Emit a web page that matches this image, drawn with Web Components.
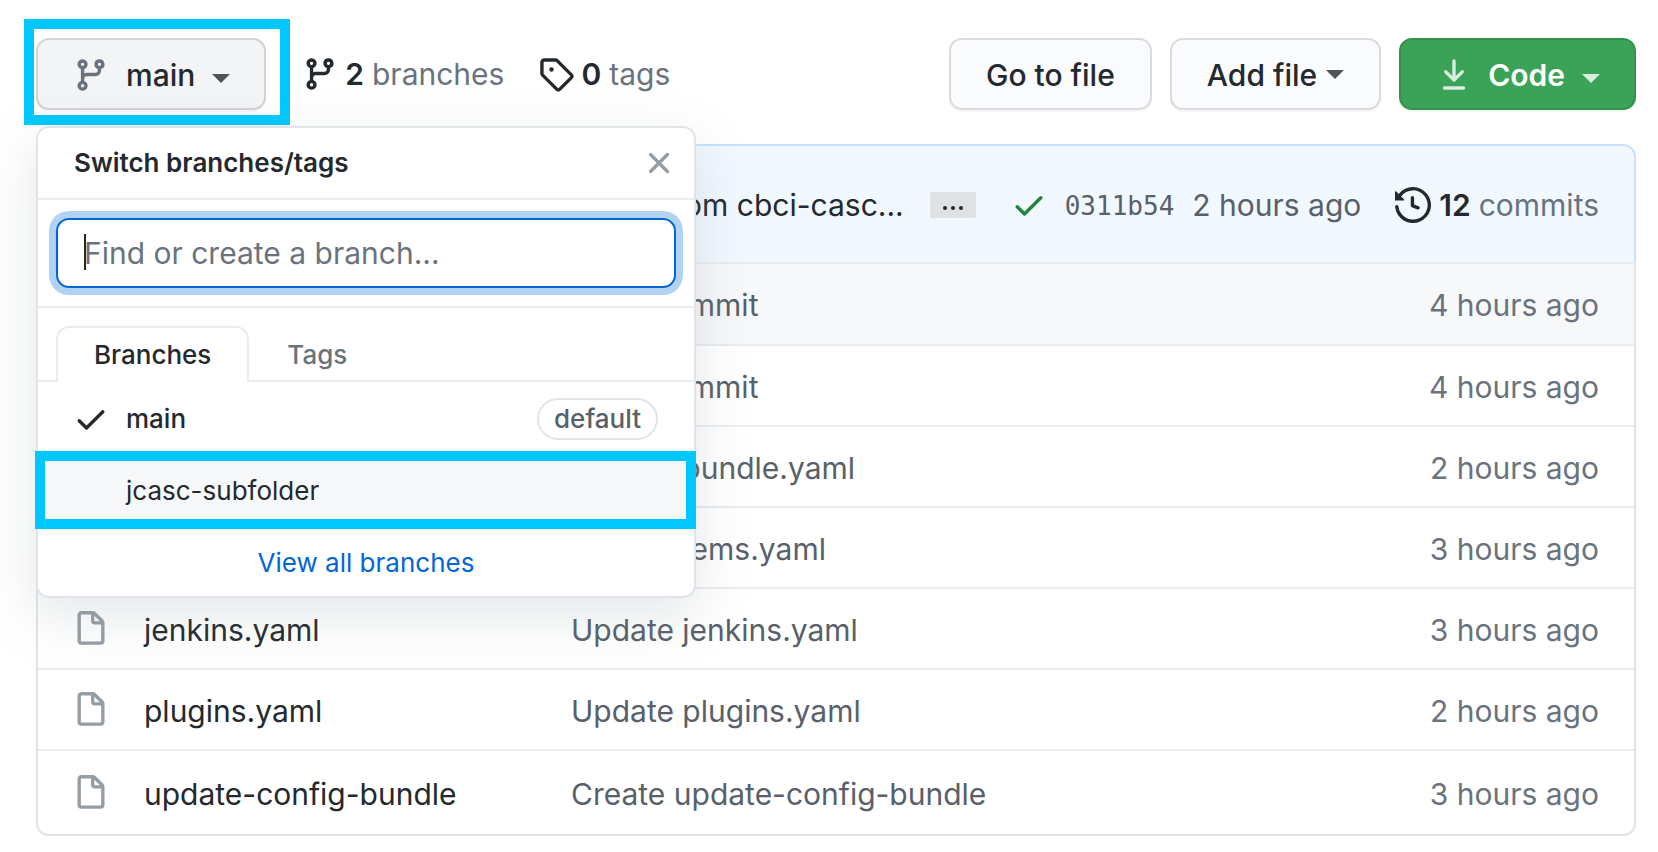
<!DOCTYPE html>
<html lang="en">
<head>
<meta charset="utf-8">
<meta name="viewport" content="width=device-width, initial-scale=1">
<title>Repository files</title>
<style>
  body {
    margin: 0;
    background: #fff;
    color: #24292e;
    font: 400 30px/46px Inter, "Liberation Sans", sans-serif;
  }
</style>
</head>
<body>
<repo-page></repo-page>

<script>
const define = (name, html, setup) => {
  const template = document.createElement('template');
  template.innerHTML = html;
  customElements.define(name, class extends HTMLElement {
    connectedCallback() {
      if (this.shadowRoot) return;
      const root = this.attachShadow({ mode: 'open' });
      root.append(template.content.cloneNode(true));
      if (setup) setup(this, root);
    }
  });
};

const ICONS = {
  branch: 'M11.75 2.5a.75.75 0 100 1.5.75.75 0 000-1.5zm-2.25.75a2.25 2.25 0 113 2.122V6A2.5 2.5 0 0110 8.5H6a1 1 0 00-1 1v1.128a2.251 2.251 0 11-1.5 0V5.372a2.25 2.25 0 111.5 0v1.836A2.492 2.492 0 016 7h4a1 1 0 001-1v-.628A2.25 2.25 0 019.5 3.25zM4.25 12a.75.75 0 100 1.5.75.75 0 000-1.5zM3.5 3.25a.75.75 0 111.5 0 .75.75 0 01-1.5 0z',
  tag: 'M2.5 7.775V2.75a.25.25 0 01.25-.25h5.025a.25.25 0 01.177.073l6.25 6.25a.25.25 0 010 .354l-5.025 5.025a.25.25 0 01-.354 0l-6.25-6.25a.25.25 0 01-.073-.177zm-1.5 0V2.75C1 1.784 1.784 1 2.75 1h5.025c.464 0 .91.184 1.238.513l6.25 6.25a1.75 1.75 0 010 2.474l-5.026 5.026a1.75 1.75 0 01-2.474 0l-6.25-6.25A1.75 1.75 0 011 7.775zM6 5a1 1 0 100 2 1 1 0 000-2z',
  check: 'M13.78 4.22a.75.75 0 010 1.06l-7.25 7.25a.75.75 0 01-1.06 0L2.22 9.28a.75.75 0 011.06-1.06L6 10.94l6.72-6.72a.75.75 0 011.06 0z',
  x: 'M3.72 3.72a.75.75 0 011.06 0L8 6.94l3.22-3.22a.75.75 0 111.06 1.06L9.06 8l3.22 3.22a.75.75 0 11-1.06 1.06L8 9.06l-3.22 3.22a.75.75 0 01-1.06-1.06L6.94 8 3.72 4.78a.75.75 0 010-1.06z',
  history: 'M1.643 3.143L.427 1.927A.25.25 0 000 2.104V5.75c0 .138.112.25.25.25h3.646a.25.25 0 00.177-.427L2.715 4.215a6.5 6.5 0 11-1.18 4.458.75.75 0 10-1.493.154 8.001 8.001 0 101.6-5.684zM7.75 4a.75.75 0 01.75.75v2.992l2.028.812a.75.75 0 01-.557 1.392l-2.5-1A.75.75 0 017 8.25v-3.5A.75.75 0 017.75 4z',
  file: 'M3.75 1.5a.25.25 0 00-.25.25v11.5c0 .138.112.25.25.25h8.5a.25.25 0 00.25-.25V6H9.75A1.75 1.75 0 018 4.25V1.5H3.75zm5.75.56v2.19c0 .138.112.25.25.25h2.19L9.5 2.06zM2 1.75C2 .784 2.784 0 3.75 0h5.086c.464 0 .909.184 1.237.513l3.414 3.414c.329.328.513.773.513 1.237v8.086A1.75 1.75 0 0112.25 15h-8.5A1.75 1.75 0 012 13.25V1.75z',
  download: 'M7.47 10.78a.75.75 0 001.06 0l3.75-3.75a.75.75 0 00-1.06-1.06L8.75 8.44V1.75a.75.75 0 00-1.5 0v6.69L4.78 5.97a.75.75 0 00-1.06 1.06l3.75 3.75zM3.75 13a.75.75 0 000 1.5h8.5a.75.75 0 000-1.5h-8.5z'
};

define('git-icon', `
  <style>
    :host { display: block; flex: none; width: 36px; height: 36px; }
    svg { display: block; width: 100%; height: 100%; fill: currentColor; fill-rule: evenodd; }
  </style>
  <svg viewBox="0 0 16 16" aria-hidden="true"><path/></svg>`,
  (host, root) => root.querySelector('path').setAttribute('d', ICONS[host.getAttribute('name')]));

define('drop-caret', `
  <style>
    :host { display: block; flex: none; }
    svg { display: block; fill: currentColor; }
  </style>
  <svg width="18" height="9" viewBox="0 0 18 9" aria-hidden="true"><path d="M0 0H18L9 9Z"/></svg>`);

define('tool-button', `
  <style>
    :host { display: block; flex: none; }
    button {
      display: flex; align-items: center; box-sizing: border-box;
      height: 72px; padding: 2px 35px 0;
      border: 2px solid #d9dbde; border-radius: 13px;
      background: #fafbfc; color: #24292e;
      box-shadow: 0 2px 0 rgba(27,31,35,.04);
      font: 500 30px/46px Inter, "Liberation Sans", sans-serif;
      white-space: nowrap; cursor: pointer;
    }
    ::slotted(git-icon) { color: #6a737d; margin-right: 17px; }
    ::slotted(drop-caret) { color: #505459; margin: 0 0 2px 9px; }
    :host([kind=branch]) button { background: #f3f4f6; border-color: #d1d3d6; }
    :host([kind=branch]) button, :host([kind=primary]) button { padding: 2px 34px 0 35px; }
    :host([kind=primary]) button { background: #3aa357; border-color: #33914d; color: #fff; font-weight: 600; }
    :host([kind=primary]) ::slotted(git-icon) { color: #d8eddd; margin-right: 16px; }
    :host([kind=primary]) ::slotted(drop-caret) { color: #d8eddd; }
    :host([kind=branch]) ::slotted(drop-caret),
    :host([kind=primary]) ::slotted(drop-caret) { margin: 6px 0 0 17px; }
  </style>
  <button type="button"><slot></slot></button>`);

define('ref-count', `
  <style>
    :host { display: block; flex: none; }
    a { display: flex; align-items: center; color: #6a737d; text-decoration: none; white-space: nowrap; }
    b { font-weight: 600; color: #24292e; margin: 0 8px 0 var(--icon-gap, 8px); }
    git-icon { color: #24292e; }
  </style>
  <a href="#"><git-icon></git-icon><b></b><slot></slot></a>`,
  (host, root) => {
    root.querySelector('b').textContent = host.getAttribute('count');
    const icon = document.createElement('git-icon');
    icon.setAttribute('name', host.getAttribute('icon'));
    root.querySelector('git-icon').replaceWith(icon);
  });

define('branch-menu', `
  <style>
    :host {
      display: block; box-sizing: border-box; width: 660px;
      border: 2px solid #e1e4e8; border-radius: 13px; background: #fff;
      box-shadow: 0 18px 54px rgba(140,149,159,.24);
      font-size: 26px; line-height: 36px;
    }
    * { box-sizing: border-box; }
    header {
      display: flex; align-items: center; justify-content: space-between;
      height: 72px; padding: 0 17px 0 36px; border-bottom: 2px solid #eaecef;
    }
    h2 { margin: 0; font-size: 26px; line-height: 36px; font-weight: 600; }
    button { border: 0; background: none; font: inherit; cursor: pointer; }
    .close { padding: 0; color: #959da5; }
    .search { position: relative; padding: 18px; border-bottom: 2px solid #eaecef; }
    input {
      display: block; width: 100%; height: 70px; padding: 0 26px;
      border: 2px solid #0366d6; border-radius: 13px; outline: 0; background: #fff;
      box-shadow: 0 0 0 7px #b1d2f2; caret-color: transparent;
      color: #24292e; font: 400 30px/46px Inter, "Liberation Sans", sans-serif;
    }
    input::placeholder { color: #6a737d; opacity: 1; }
    .cursor { position: absolute; left: 46px; top: 34px; width: 2px; height: 36px; background: #24292e; }
    .tabs { display: flex; height: 74px; padding: 18px 18px 0; border-bottom: 2px solid #eaecef; }
    .tabs button { height: 56px; padding: 0 36px; color: #6a737d; font-weight: 500; border: 2px solid transparent; border-bottom: 0; }
    .tabs .on { color: #24292e; background: #fff; border-color: #eaecef; border-radius: 13px 13px 0 0; }
    .item {
      display: grid; grid-template-columns: 36px 1fr auto; align-items: center; column-gap: 17px;
      width: 100%; height: 72px; padding: 2px 36px 0 35px; text-align: left; color: #24292e;
    }
    .item.current { font-weight: 500; }
    .item.hot { position: relative; background: #f6f8fa; }
    .item.hot::after { content: ""; position: absolute; inset: -3px -2px -3px -3px; border: 10px solid #00c8ff; }
    .pill { height: 42px; padding: 0 15px; border: 2px solid #e1e4e8; border-radius: 21px; color: #586069; line-height: 38px; }
    .all { display: block; padding: 19px 0 15px; text-align: center; color: #0366d6; text-decoration: none; }
  </style>
  <header>
    <h2>Switch branches/tags</h2>
    <button class="close" type="button" aria-label="Close"><git-icon name="x"></git-icon></button>
  </header>
  <div class="search">
    <input type="text" aria-label="Find or create a branch" placeholder="Find or create a branch...">
    <span class="cursor"></span>
  </div>
  <div class="tabs" role="tablist">
    <button class="on" type="button" role="tab" aria-selected="true">Branches</button>
    <button type="button" role="tab" aria-selected="false">Tags</button>
  </div>
  <button class="item current" type="button"><git-icon name="check"></git-icon><span>main</span><span class="pill">default</span></button>
  <button class="item hot" type="button"><span></span><span>jcasc-subfolder</span></button>
  <a class="all" href="#">View all branches</a>`);

define('latest-commit', `
  <style>
    :host {
      display: flex; align-items: center; box-sizing: border-box; height: 120px;
      margin: -2px -2px 0; padding: 2px 35px 0;
      border: 2px solid #c8e1ff; border-bottom-color: #eaecef; border-radius: 13px 13px 0 0;
      background: #f1f8ff; color: #586069; white-space: nowrap;
    }
    .message { flex: 1; text-align: right; color: #24292e; }
    .more {
      display: flex; justify-content: center; align-items: center; gap: 4px;
      width: 46px; height: 26px; margin: 0 35px 0 26px; padding: 6px 0 0;
      border: 0; border-radius: 2px; background: #dfe2e5; cursor: pointer;
    }
    .more i { width: 4px; height: 4px; border-radius: 50%; background: #24292e; }
    .ok { color: #22863a; }
    a { color: inherit; text-decoration: none; }
    .sha { margin: 0 18px; padding-top: 2px; font: 26px/46px "DejaVu Sans Mono", monospace; }
    ref-count { margin-left: 34px; }
  </style>
  <span class="message">from cbci-casc...</span>
  <button class="more" type="button" aria-label="Show full message"><i></i><i></i><i></i></button>
  <git-icon class="ok" name="check"></git-icon>
  <a class="sha" href="#">0311b54</a>
  <a href="#">2 hours ago</a>
  <ref-count icon="history" count="12">commits</ref-count>`);

const FILES = [
  ['', 'Initial commit', '4 hours ago'],
  ['', 'Initial commit', '4 hours ago'],
  ['', 'Update bundle.yaml', '2 hours ago'],
  ['', 'Create items.yaml', '3 hours ago'],
  ['jenkins.yaml', 'Update jenkins.yaml', '3 hours ago'],
  ['plugins.yaml', 'Update plugins.yaml', '2 hours ago'],
  ['update-config-bundle', 'Create update-config-bundle', '3 hours ago']
];

define('file-table', `
  <style>
    :host { display: block; }
    table { width: 100%; border-collapse: separate; border-spacing: 0; table-layout: fixed; }
    td { box-sizing: border-box; height: 81px; padding: 2px 0 0; border-bottom: 2px solid #eaecef; color: #586069; white-space: nowrap; vertical-align: middle; }
    tr:first-child td { height: 82px; background: #f6f8fa; }
    tr:last-child td { height: 83px; border-bottom: 0; }
    td:first-child { padding: 0 0 0 35px; width: 106px; }
    td:nth-child(2) { width: 427px; }
    td:last-child { width: 260px; padding-right: 35px; text-align: right; color: #6a737d; }
    git-icon { color: #959da5; }
    a { color: #24292e; text-decoration: none; }
    td:nth-child(3) a { color: inherit; }
  </style>
  <table aria-label="Files"><tbody></tbody></table>`,
  (host, root) => {
    root.querySelector('tbody').innerHTML = FILES.map(([name, message, age]) => `
      <tr>
        <td>${name && '<git-icon name="file"></git-icon>'}</td>
        <td>${name && `<a href="#">${name}</a>`}</td>
        <td><a href="#">${message}</a></td>
        <td>${age}</td>
      </tr>`).join('');
  });

define('repo-page', `
  <style>
    :host { display: block; padding: 38px 22px 16px 36px; }
    nav { display: flex; align-items: center; margin-bottom: 34px; }
    .picker { position: relative; flex: none; margin-right: 36px; }
    .picker::after { content: ""; position: absolute; inset: -19px -24px -15px -12px; border: 10px solid #00c8ff; pointer-events: none; }
    branch-menu { position: absolute; left: 0; top: 88px; z-index: 1; }
    .counts { display: flex; gap: 34px; flex: 1; --icon-gap: 7px; }
    .actions { display: flex; gap: 18px; }
    .files { border: 2px solid #e1e4e8; border-radius: 13px; }
  </style>
  <nav>
    <div class="picker">
      <tool-button kind="branch"><git-icon name="branch"></git-icon>main<drop-caret></drop-caret></tool-button>
      <branch-menu></branch-menu>
    </div>
    <div class="counts">
      <ref-count icon="branch" count="2">branches</ref-count>
      <ref-count icon="tag" count="0">tags</ref-count>
    </div>
    <div class="actions">
      <tool-button>Go to file</tool-button>
      <tool-button>Add file<drop-caret></drop-caret></tool-button>
      <tool-button kind="primary"><git-icon name="download"></git-icon>Code<drop-caret></drop-caret></tool-button>
    </div>
  </nav>
  <div class="files">
    <latest-commit></latest-commit>
    <file-table></file-table>
  </div>`);
</script>
</body>
</html>
